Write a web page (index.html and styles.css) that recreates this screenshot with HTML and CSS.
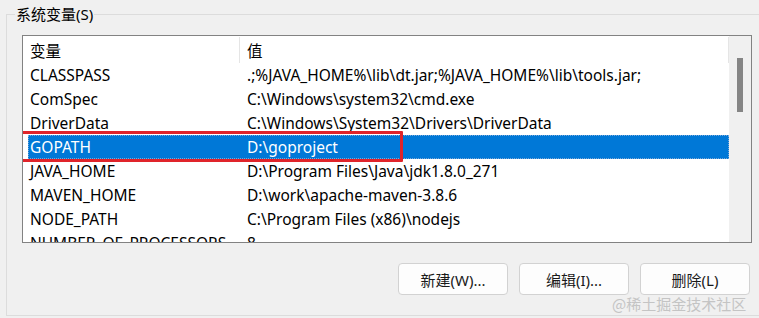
FILE: index.html
```html
<!DOCTYPE html>
<html lang="zh-CN">
<head>
<meta charset="utf-8">
<title>系统变量</title>
<link rel="stylesheet" href="styles.css">
</head>
<body>
<div class="window">
  <div class="group">
    <div class="legend">系统变量(S)</div>
    <div class="list">
      <div class="list-main">
        <div class="header">
          <div class="col1 hcell">变量</div>
          <div class="col2 hcell">值</div>
        </div>
        <div class="row"><div class="col1">CLASSPASS</div><div class="col2">.;%JAVA_HOME%\lib\dt.jar;%JAVA_HOME%\lib\tools.jar;</div></div>
        <div class="row"><div class="col1">ComSpec</div><div class="col2">C:\Windows\system32\cmd.exe</div></div>
        <div class="row"><div class="col1">DriverData</div><div class="col2">C:\Windows\System32\Drivers\DriverData</div></div>
        <div class="row selected"><div class="col1">GOPATH</div><div class="col2">D:\goproject</div><div class="mark"></div></div>
        <div class="row"><div class="col1">JAVA_HOME</div><div class="col2">D:\Program Files\Java\jdk1.8.0_271</div></div>
        <div class="row"><div class="col1">MAVEN_HOME</div><div class="col2">D:\work\apache-maven-3.8.6</div></div>
        <div class="row"><div class="col1">NODE_PATH</div><div class="col2">C:\Program Files (x86)\nodejs</div></div>
        <div class="row"><div class="col1">NUMBER_OF_PROCESSORS</div><div class="col2">8</div></div>
      </div>
      <div class="scrollbar"><div class="thumb"></div></div>
    </div>
    <div class="buttons">
      <button class="btn">新建(W)...</button>
      <button class="btn">编辑(I)...</button>
      <button class="btn">删除(L)</button>
    </div>
  </div>
  <div class="watermark">@稀土掘金技术社区</div>
</div>
</body>
</html>
```
FILE: styles.css
```css
html, body {
  margin: 0;
  padding: 0;
  background: #f0f0f0;
  overflow: hidden;
}
.window {
  position: relative;
  width: 759px;
  height: 318px;
  overflow: hidden;
  font-family: "Noto Sans", "Noto Sans CJK SC", sans-serif;
  font-size: 15.5px;
  color: #000;
}
.group {
  margin: 14px 0 0 6px;
  width: 800px;
  height: 302px;
  box-sizing: border-box;
  border: 1px solid #dcdcdc;
  padding: 0 0 0 15px;
}
.legend {
  display: block;
  width: fit-content;
  margin: -11px 0 0 -7px;
  padding: 0 1px;
  height: 20px;
  line-height: 20px;
  background: #f0f0f0;
  font-size: 15px;
}
.list {
  margin-top: 11px;
  width: 730px;
  height: 208px;
  box-sizing: border-box;
  border: 1px solid #828282;
  background: #fff;
  display: flex;
  overflow: hidden;
}
.list-main {
  flex: 1;
  min-width: 0;
  overflow: hidden;
}
.header {
  display: flex;
  height: 27px;
  align-items: stretch;
}
.hcell {
  display: flex;
  align-items: center;
  border-right: 1px solid #e5e5e5;
  margin: 1px 0 0;
}
.row {
  position: relative;
  display: flex;
  height: 24px;
  align-items: center;
  white-space: nowrap;
}
.col1 {
  width: 217px;
  flex: none;
  box-sizing: border-box;
  padding-left: 7px;
}
.col2 {
  flex: 1;
  box-sizing: border-box;
  padding-left: 7px;
}
.row.selected {
  background: #0078d7;
  color: #fff;
  margin-left: 5px;
  outline: 1px dotted #7aa8d8;
  outline-offset: -1px;
}
.row.selected .col1 { width: 212px; padding-left: 2px; }
.mark {
  position: absolute;
  left: -8px;
  top: -4px;
  width: 377px;
  height: 25px;
  border: 3px solid #e0242a;
  border-radius: 1px;
}
.scrollbar {
  width: 22px;
  flex: none;
  background: #f0f0f0;
  display: flex;
  justify-content: center;
  padding-top: 22px;
  box-sizing: border-box;
}
.thumb {
  width: 6px;
  height: 54px;
  background: #858585;
}
.buttons {
  width: 728px;
  margin-top: 20px;
  display: flex;
  justify-content: flex-end;
  gap: 11px;
}
.btn {
  width: 110px;
  height: 32px;
  box-sizing: border-box;
  border: 1px solid #d2d2d2;
  border-radius: 4px;
  background: #fdfdfd;
  font-family: "Noto Sans", "Noto Sans CJK SC", sans-serif;
  font-size: 15px;
  color: #1a1a1a;
  padding: 0;
}
.watermark {
  position: absolute;
  left: 612px;
  top: 294px;
  font-family: "Noto Sans CJK SC", sans-serif;
  font-size: 15px;
  line-height: 20px;
  color: #c4c4c4;
}
```
